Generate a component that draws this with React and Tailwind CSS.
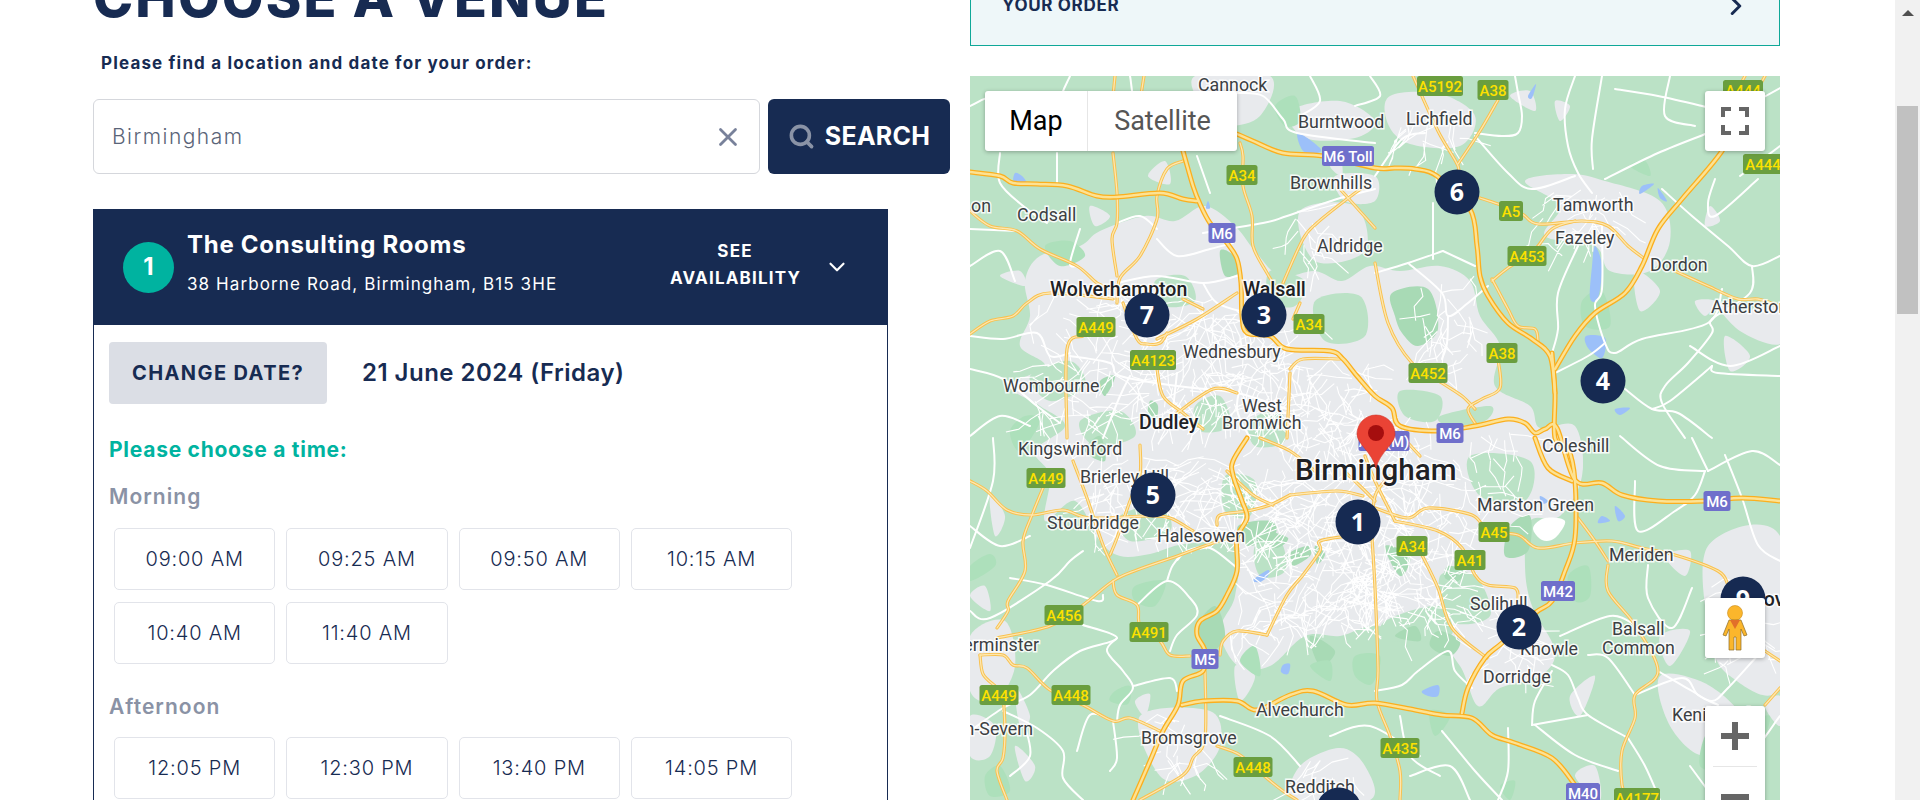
import React from 'react';
import { Search, X, ChevronDown, ChevronRight } from 'lucide-react';

const MORNING = ['09:00 AM', '09:25 AM', '09:50 AM', '10:15 AM', '10:40 AM', '11:40 AM'];
const AFTERNOON = ['12:05 PM', '12:30 PM', '13:40 PM', '14:05 PM'];

// --- map data, all in px relative to the map's top left corner ---
const URBAN = [
  '55,205 70,180 110,170 130,155 175,140 205,145 235,130 265,150 285,175 310,200 345,195 372,205 400,190 430,195 470,190 500,205 510,240 530,270 525,310 560,330 570,352 605,350 612,400 590,440 560,445 555,490 562,530 585,575 570,600 530,612 508,630 490,590 460,560 405,550 370,560 335,560 300,590 268,590 250,555 265,520 265,470 215,468 180,478 150,480 130,465 105,425 75,445 80,400 65,375 95,350 70,330 40,310 75,290 50,270 60,240',
  '225,0 300,0 290,40 255,50 235,35',
  '320,35 370,25 405,45 385,62 335,62',
  '420,20 470,18 505,40 490,70 440,68 418,48',
  '555,105 600,98 635,105 690,125 700,165 680,195 640,195 625,170 575,160 590,130',
  '745,225 770,235 810,232 810,268 770,255',
  '738,470 810,460 810,610 760,600 740,560',
  '170,640 240,635 250,670 225,700 190,700',
  '330,690 370,672 395,690 400,724 325,724',
  '0,560 35,545 45,590 25,625 0,615',
  '0,640 25,650 20,680 0,680',
  '330,135 385,130 395,175 345,185',
  '365,100 405,100 405,125 375,125',
  '690,600 740,610 775,650 735,680 700,650',
  '570,375 605,360 612,395 590,400',
];
const PARKS = [
  '422,217 458,213 468,253 448,270 432,257 425,240',
  '250,175 262,178 270,195 255,200',
  '180,325 188,330 185,348 178,340',
  '130,305 145,300 135,320',
  '300,205 310,215 302,225',
  '268,450 300,445 305,458 278,470',
  '318,478 338,470 340,480 322,490',
  '345,470 355,478 347,488',
  '293,455 318,462 305,472',
  '415,470 440,480 430,500',
  '478,490 495,495 488,505 475,502',
  '540,450 560,440 558,475 535,480',
  '468,555 490,565 480,580 460,570',
  '425,560 445,550 450,565',
  '340,560 365,575 350,590',
  '225,555 245,530 255,560 240,575',
  '115,375 130,360 135,385',
];
// lighter green fingers that cut into the built up area
const FINGERS = [
  '60,300 100,285 115,310 80,325', '110,345 150,335 165,360 125,370', '225,330 250,320 260,350 230,355',
  '280,345 310,335 315,365 285,370', '185,205 215,200 225,225 195,230', '300,195 335,205 325,230 300,225',
  '345,225 390,220 395,260 355,265', '470,340 520,330 515,345 480,350', '500,380 560,385 555,425 510,420',
  '285,470 310,465 315,495 290,500', '470,500 505,500 520,540 480,545', '415,545 470,530 480,560 420,565',
  '255,400 285,405 280,440 255,435', '150,440 190,430 200,455 160,465', '430,315 470,320 465,345 435,340',
];
const DARK_GREEN = [
  '40,355 55,340 70,345 50,375', '0,490 20,478 25,490 0,505', '165,510 195,505 185,530 165,525',
  '145,615 160,610 158,628 140,625', '385,580 410,580 402,608 385,600', '270,585 285,570 290,600',
  '305,30 325,20 330,45 315,50', '75,170 100,165 115,180 90,190', '660,90 675,85 680,100',
  '612,225 632,215 640,250 615,250', '598,500 618,490 620,520 605,525', '780,650 800,640 790,670',
  '15,700 30,690 40,715 20,720', '340,590 360,585 360,605', '460,635 480,640 465,660',
  '735,660 750,650 750,690 730,690', '530,710 545,705 540,724',
];
const GREY_PATCH = [
  '40,35 55,30 60,45', '178,100 195,85 200,108', '120,130 140,140 125,150', '30,200 50,195 55,210',
  '360,90 370,80 372,100', '20,420 35,440 25,460', '0,520 15,510 20,535', '45,610 60,640 50,650',
  '165,625 180,618 175,640', '45,670 65,690 55,705', '265,590 285,600 270,625', '600,620 625,600 610,640',
  '690,560 720,555 700,590', '665,195 690,215 670,235', '725,225 745,225 735,240', '585,25 600,30 590,45',
  '740,130 750,145 735,150', '605,700 625,690 630,724', '540,20 560,15 565,35', '770,35 790,40 775,55',
  '795,630 810,620 810,650', '695,480 720,475 715,500', '755,260 780,280 760,295',
];
const WATER = [
  '328,57 350,72 347,77 333,75', '45,97 52,100 56,107 44,106', '616,260 635,262 632,282 618,272',
  '625,170 632,190 628,222 620,222 622,190', '283,504 298,494 298,500 290,506', '645,333 660,332 650,339',
  '313,589 320,588 318,598 311,596', '452,615 468,609 468,620 458,620', '672,110 684,108 670,118',
  '688,112 697,125 690,122', '558,20 566,8 562,22', '238,125 240,132 236,132', '570,420 578,425 572,428',
  '645,430 655,440 648,445', '632,440 640,445 628,447',
];
const WHITE_ROADS = [
  '645,13 688,20 732,30 742,33', '545,0 548,17 552,40 548,57 532,60 505,57', '605,0 595,33 598,70 608,97 622,117',
  '632,0 622,63 623,93', '505,60 538,97 562,113 605,100', '635,103 688,77 738,57', '692,113 722,140 758,170 782,190 810,180',
  '745,103 738,127 745,140 788,103', '632,150 632,213 625,230 635,267 645,277 672,263 738,247 752,213',
  '608,170 588,217 588,253 582,277', '782,190 780,217 742,243 742,257 718,287 695,310 692,327 715,362',
  '655,313 682,333 708,337 742,362', '742,290 748,297 810,300', '682,333 700,325 742,290', '585,297 618,280 635,267',
  '473,175 438,187 405,197', '473,175 505,190', '438,187 472,217 478,240 498,227 518,210', '478,240 477,267 472,283',
  '463,127 463,183', '405,100 432,63 455,57', '267,17 293,20 313,43 327,57 405,67', '405,113 367,123 317,140 293,147 233,157',
  '227,80 240,117', '30,77 30,107 57,133 77,147', '87,77 87,107', '110,153 100,187 107,190', '147,147 170,140 187,153',
  '0,153 47,155', '187,163 207,180 240,173 263,167', '147,207 187,200 233,207 267,200', '233,207 247,227 277,237',
  '0,260 33,263 67,257 80,280 100,277', '100,280 140,287 150,300 207,310 267,317 317,333', '0,293 33,303 67,330 90,347',
  '133,362 150,320 160,300', '207,297 203,333', '273,300 267,333 280,362', '23,362 23,405 0,472',
  '0,535 20,542 80,505 100,485 113,475', '40,502 77,509 127,525 133,519', '113,549 147,562 110,575 83,595 60,619 33,632 0,655',
  '147,562 137,575 153,595 163,612 150,629 147,645', '163,610 200,602 207,615', '167,529 197,505 220,522 227,539 207,559 200,575',
  '197,505 203,489 217,475 240,472 267,492', '107,675 120,639 143,645', '33,635 67,652 93,675 93,702 113,724',
  '140,695 147,682 143,645', '582,589 598,599 608,622 618,639 658,662', '562,649 618,639', '562,649 565,625 582,595',
  '538,652 538,695 528,724', '618,579 638,582 665,619', '688,595 722,615 742,625 758,612 788,579', '678,489 678,522 702,552 722,512',
  '665,405 668,455 705,435 725,419 735,395', '755,379 772,422 788,469 810,485', '738,395 782,375 810,389', '722,362 738,395',
  '665,619 712,602 728,619 748,629', '405,615 432,609 448,595 478,575 485,595 502,612', '565,649 605,679 648,695',
  '472,655 505,695 532,724', '658,662 675,690 690,724', '720,690 745,724', '745,650 775,680 810,640', '0,30 30,20 75,40',
  '100,0 90,30 110,60', '160,0 170,40 210,60', '760,40 810,12', '40,700 60,680 55,650', '250,640 300,660 330,690', '470,700 440,680 430,640',
  '360,660 400,650 450,680', '0,190 30,175 45,205', '340,0 350,25 330,40', '400,0 410,20 385,30', '700,0 695,40 725,50', '770,100 810,70',
  '0,360 30,340 60,350', '60,460 30,470 0,450', '720,270 760,290 810,270', '650,360 690,390 735,395', '590,560 640,540 665,549', '440,700 480,690 500,724',
];
const THIN_ROADS = [
  '143,77 147,117 147,147 142,163 147,200', '213,85 197,93 187,120 187,143 170,180 150,202 147,227',
  '0,135 20,150 47,155 70,173 107,190 127,207 143,213', '0,258 20,245 43,240 57,227 80,217 143,223', '213,223 233,233',
  '187,263 227,243 267,217', '97,362 97,273 113,260', '153,227 167,263 177,268 190,267 197,257', '187,293 193,320 213,337 233,353',
  '207,337 243,313 267,317', '320,293 333,283 370,283', '320,297 317,362', '270,67 273,80 273,110 282,140 283,170 297,197 307,213',
  '330,227 323,243', '395,110 377,123 347,147 333,163 313,207', '370,113 405,152', '405,187 418,247 442,287 472,307 492,320 505,333',
  '528,283 530,312 512,323 498,333 507,350', '522,203 538,233 548,250 565,253 568,265', '522,205 538,192 562,177 582,153 605,145',
  '510,122 528,128 552,138 568,148 612,145 638,150 658,170 675,183', '705,195 738,210 768,223 788,223 810,230',
  '443,0 468,55 488,90 485,100', '488,88 510,55 528,24', '174,0 170,25', '145,0 142,30', '775,0 765,18', '795,0 785,18',
  '27,562 80,550 113,529 143,505 167,494 210,479 237,469 267,459', '0,405 17,415 37,434 62,439 93,434 120,442 177,440 200,442 223,455',
  '73,412 62,439 53,465 55,495 38,525 38,535 27,552', '103,385 117,422 133,469 147,499', '170,369 170,399 160,425 147,462 140,479',
  '143,505 147,519 167,529 170,549 190,565 200,579 220,580', '10,579 33,579 43,589 57,592 80,614 113,629 143,645 160,642 190,655',
  '33,615 35,655 33,682 27,695 37,724', '10,579 13,598 25,610', '235,595 235,662 223,682 213,699 170,724', '247,670 270,679 293,699 313,715 327,724',
  '297,559 267,555 253,565 250,579', '297,559 317,519 333,499 350,475 350,465 377,460', '320,419 367,415 393,420', '320,419 300,429 277,435 250,439 247,449',
  '257,395 283,419 303,429', '402,462 405,512 408,592 407,625 420,660 430,695 430,724', '452,479 468,512 482,552 517,582', '405,432 438,442 458,432 502,439 518,455 548,459 568,472 605,467 642,465 672,472 705,479 748,495 758,509',
  '425,445 468,455 492,472 505,499 518,509 545,512 548,525', '638,489 638,515 665,549 688,595 665,619 665,642 652,675 652,709 658,724',
  '608,442 625,465 638,485', '810,612 795,629', '795,575 810,585', '395,380 405,405 425,445', '420,400 405,420 402,462', '375,396 390,410 405,425', '290,362 320,375 345,395',
  '450,380 428,356',
];
const MOTORWAYS = [
  '0,96 30,100 43,107 67,108 97,110 127,120 147,121 190,117 213,123 227,125',
  '213,75 223,110 230,128 240,147 257,167 267,183 271,207 272,240 277,257 300,260 317,273 360,275 373,283 387,300 405,320 422,332 430,350 468,355 505,350 538,343 555,347 565,357 575,353 587,352 605,404 632,407 652,419 688,425 735,425 772,422 810,425',
  '582,277 585,317 585,362 598,372 605,405 605,462 595,495 582,525 565,537 532,567 515,582 498,612 492,637',
  '267,58 283,65 313,77 353,80 405,92 425,92 445,93 467,100 500,133 507,170 510,200 518,220 538,247 562,263 580,280 585,317',
  '585,293 605,260 625,237 655,217 672,190 688,153 712,123 752,75 775,30',
  '277,362 263,385 263,399 272,425 277,442 267,462 267,495 257,519 247,535 230,545 227,559 235,575 233,595 213,605 208,629 193,655 180,685 163,724',
  '212,629 233,625 267,625 287,634 320,619 343,615 377,629 405,627 445,634 472,639 502,642 522,659 545,667 582,682 605,709 615,724',
  '565,362 578,392 602,405',
];
const SHIELDS = [
  ['A34', 272, 99, 31], ['M6 Toll', 378, 80, 52, 1], ['M6', 252, 157, 27, 1], ['A34', 339, 248, 31], ['A449', 126, 251, 39], ['A4123', 183, 284, 46],
  ['A5192', 470, 10, 46], ['A38', 523, 14, 31], ['A444', 793, 88, 40], ['A444', 773, 14, 40], ['A5', 541, 135, 24], ['A453', 557, 180, 39], ['A38', 532, 277, 31], ['A452', 458, 297, 39],
  ['M6', 480, 357, 27, 1], ['A38(M)', 414, 365, 51, 1], ['A449', 76, 402, 39], ['A456', 94, 539, 39], ['A491', 179, 556, 39], ['M5', 235, 583, 27, 1], ['A449', 29, 619, 39], ['A448', 101, 619, 39],
  ['A448', 283, 691, 39], ['M6', 747, 425, 27, 1], ['A45', 524, 456, 31], ['A34', 442, 470, 31], ['A41', 500, 484, 31], ['M42', 588, 515, 34, 1], ['A435', 430, 672, 39], ['M40', 613, 717, 34, 1], ['A4177', 667, 722, 46],
];
const LABELS = [
  ['Cannock', 228, 15], ['Burntwood', 328, 52], ['Brownhills', 320, 113], ['Codsall', 47, 145], ['on', 1, 136], ['Aldridge', 347, 176],
  ['Wolverhampton', 80, 220, 500], ['Walsall', 273, 220, 500], ['Wednesbury', 213, 282], ['Wombourne', 33, 316], ['West', 272, 336], ['Bromwich', 252, 353], ['Dudley', 169, 353, 500],
  ['Lichfield', 436, 49], ['Tamworth', 583, 135], ['Fazeley', 585, 168], ['Dordon', 680, 195], ['Atherstone', 741, 237],
  ['Kingswinford', 48, 379], ['Brierley Hill', 110, 407], ['Stourbridge', 77, 453], ['Halesowen', 187, 466], ['Alvechurch', 286, 640], ['Bromsgrove', 171, 668], ['Redditch', 315, 717],
  ['Coleshill', 572, 376], ['Marston Green', 507, 435], ['Meriden', 639, 485], ['Solihull', 500, 534], ['Knowle', 550, 579], ['Balsall', 642, 559], ['Common', 632, 578], ['Dorridge', 513, 607], ['Kenilworth', 702, 645], ['Coventry', 781, 530, 500],
];
const PINS = [['7', 177, 239], ['3', 294, 239], ['6', 487, 116], ['4', 633, 305], ['5', 183, 419], ['1', 388, 446], ['2', 549, 551], ['9', 773, 523], ['8', 369, 734]];

function pts(s) {
  return s.split(' ').map(p => p.split(',').map(Number));
}

// catmull-rom through the traced points so the roads don't look like zigzags
function smooth(s) {
  const p = pts(s);
  let d = `M${p[0][0]} ${p[0][1]}`;
  for (let i = 0; i < p.length - 1; i++) {
    const a = p[i - 1] || p[i];
    const b = p[i];
    const c = p[i + 1];
    const e = p[i + 2] || c;
    d += ` C${b[0] + (c[0] - a[0]) / 6} ${b[1] + (c[1] - a[1]) / 6} ${c[0] - (e[0] - b[0]) / 6} ${c[1] - (e[1] - b[1]) / 6} ${c[0]} ${c[1]}`;
  }
  return d;
}

// same thing, closed, for the land use blobs
function blob(s) {
  const p = pts(s);
  const n = p.length;
  let d = `M${p[0][0]} ${p[0][1]}`;
  for (let i = 0; i < n; i++) {
    const a = p[(i - 1 + n) % n];
    const b = p[i];
    const c = p[(i + 1) % n];
    const e = p[(i + 2) % n];
    d += ` C${b[0] + (c[0] - a[0]) / 6} ${b[1] + (c[1] - a[1]) / 6} ${c[0] - (e[0] - b[0]) / 6} ${c[1] - (e[1] - b[1]) / 6} ${c[0]} ${c[1]}`;
  }
  return d + 'Z';
}

// small street mesh for the built up areas
function streets() {
  const blobs = [
    [370, 495, 55, 55, 130], [440, 500, 55, 50, 70], [300, 430, 50, 40, 70], [190, 420, 70, 40, 90], [150, 280, 85, 65, 110],
    [260, 290, 70, 55, 90], [340, 320, 60, 40, 70], [400, 390, 60, 50, 70], [480, 400, 70, 50, 50], [290, 520, 30, 40, 25],
    [480, 250, 30, 50, 25], [610, 140, 40, 30, 20], [460, 50, 30, 20, 15], [775, 540, 30, 50, 25], [205, 670, 25, 25, 15], [360, 700, 25, 20, 12],
    [540, 560, 30, 30, 20], [350, 160, 25, 25, 12],
  ];
  let seed = 7;
  const rnd = () => {
    seed = (seed * 16807) % 2147483647;
    return seed / 2147483647;
  };
  let d = '';
  blobs.forEach(([cx, cy, rx, ry, n]) => {
    for (let i = 0; i < n; i++) {
      let x = cx + (rnd() * 2 - 1) * rx;
      let y = cy + (rnd() * 2 - 1) * ry;
      d += `M${x.toFixed(1)} ${y.toFixed(1)}`;
      const dir = rnd() * Math.PI;
      for (let j = 0; j < 3; j++) {
        const a = dir + (rnd() - 0.5) * 1.2;
        const l = 6 + rnd() * 12;
        x += Math.cos(a) * l;
        y += Math.sin(a) * l;
        d += `L${x.toFixed(1)} ${y.toFixed(1)}`;
      }
    }
  });
  return d;
}

const HALO = { stroke: '#ffffff', strokeWidth: 3, strokeOpacity: 0.85, paintOrder: 'stroke' };

function MapCanvas() {
  return (
    <svg viewBox="0 0 810 724" className="block w-full h-full" style={{ fontFamily: 'Roboto, sans-serif' }}>
      <rect width="810" height="724" fill="#bbe2c6" />
      {URBAN.map((p, i) => <path key={i} d={blob(p)} fill="#e8eaed" />)}
      {GREY_PATCH.map((p, i) => <path key={i} d={blob(p)} fill="#e8eaed" />)}
      {FINGERS.map((p, i) => <path key={i} d={blob(p)} fill="#bbe2c6" />)}
      {PARKS.map((p, i) => <path key={i} d={blob(p)} fill="#a8dab5" />)}
      {DARK_GREEN.map((p, i) => <path key={i} d={blob(p)} fill="#ade0bb" />)}
      <path d={blob('563,452 575,442 595,445 585,462 572,464')} fill="#ffffff" />
      {WATER.map((p, i) => <path key={i} d={blob(p)} fill="#9cc0f9" />)}
      <path d={streets()} fill="none" stroke="#ffffff" strokeWidth="1.1" strokeLinejoin="round" />
      <g fill="none" stroke="#ffffff" strokeWidth="2" strokeLinejoin="round" strokeLinecap="round">
        {WHITE_ROADS.map((r, i) => <path key={i} d={smooth(r)} />)}
      </g>
      <g fill="none" strokeLinejoin="round" strokeLinecap="round">
        {THIN_ROADS.map((r, i) => <path key={i} d={smooth(r)} stroke="#f9c14e" strokeWidth="3.2" />)}
        {THIN_ROADS.map((r, i) => <path key={i} d={smooth(r)} stroke="#fde7b0" strokeWidth="1.3" />)}
        {MOTORWAYS.map((r, i) => <path key={i} d={smooth(r)} stroke="#fbaf1e" strokeWidth="5" />)}
        {MOTORWAYS.map((r, i) => <path key={i} d={smooth(r)} stroke="#fde293" strokeWidth="2.4" />)}
      </g>
      {LABELS.map(([t, x, y, w]) => (
        <text key={t} x={x} y={y} fontSize={w ? 19.5 : 17.8} fontWeight={w || 400} fill={w ? '#202124' : '#3c4043'} {...HALO}>{t}</text>
      ))}
      <text x="69" y="575" textAnchor="end" fontSize="17.8" fill="#3c4043" {...HALO}>Kidderminster</text>
      <text x="63" y="659" textAnchor="end" fontSize="17.8" fill="#3c4043" {...HALO}>Stourport-on-Severn</text>
      <text x="325" y="404" fontSize="29.6" fontWeight="500" fill="#202124" {...HALO}>Birmingham</text>
      {SHIELDS.map(([t, x, y, w, blue], i) => (
        <g key={i}>
          <rect x={x - w / 2} y={y - 10} width={w} height="20" rx="2.5" fill={blue ? '#6f6fcb' : '#6a9e3f'} />
          <text x={x} y={y + 5.5} textAnchor="middle" fontSize="15" fontWeight="500" fill={blue ? '#ffffff' : '#fde100'}>{t}</text>
        </g>
      ))}
      <path d="M406 392 C402 376 387 368 387 358 A19 19 0 1 1 425 358 C425 368 410 376 406 392 Z" fill="#ea4335" stroke="#d33426" strokeWidth="0.6" />
      <circle cx="406" cy="357" r="8" fill="#a50e0e" />
      {PINS.map(([n, x, y]) => (
        <g key={n}>
          <circle cx={x} cy={y} r="22.5" fill="#162a52" />
          <text x={x} y={y + 9} textAnchor="middle" fontSize="25" fontWeight="700" fill="#ffffff" style={{ fontFamily: '"Noto Sans", sans-serif' }}>{n}</text>
        </g>
      ))}
    </svg>
  );
}

function TimeGrid({ times }) {
  return (
    <div className="flex flex-wrap gap-x-[11px] gap-y-[12px] pl-[5px] w-[700px]">
      {times.map(t => (
        <button key={t} className="w-[161.3px] h-[62px] border border-[#e2e4ea] rounded-[5px] bg-white text-[20px] font-light text-[#172b52] tracking-[0.04em]">
          {t}
        </button>
      ))}
    </div>
  );
}

export default function App() {
  return (
    <div className="flex h-[800px] overflow-hidden bg-white text-[#172b52]" style={{ fontFamily: 'Inter, sans-serif' }}>
      <div className="flex gap-[20px] pl-[93px] flex-1">
        {/* left column */}
        <div className="w-[857px] shrink-0">
          <h1 className="-mt-[24px] h-[43px] text-[54px] leading-[43px] font-extrabold tracking-[0.04em] whitespace-nowrap">CHOOSE A VENUE</h1>
          <p className="mt-[31px] ml-[8px] h-[26px] text-[17px] leading-[26px] font-bold tracking-[0.068em] whitespace-nowrap">Please find a location and date for your order:</p>
          <div className="mt-[23px] flex gap-[8px] h-[75px]">
            <div className="w-[667px] flex items-center justify-between pl-[18px] pr-[16px] border border-[#d5d7dc] rounded-[6px]">
              <span className="text-[21px] font-light tracking-[0.07em] text-[#5a6478]">Birmingham</span>
              <X size={30} strokeWidth={2.2} className="text-[#78819a]" />
            </div>
            <button className="w-[182px] flex items-center justify-center gap-[10px] bg-[#172b52] rounded-[6px] text-white text-[25px] font-bold tracking-[0.01em]">
              <Search size={27} strokeWidth={3.2} className="text-[#8a93a6]" />
              SEARCH
            </button>
          </div>
          <div className="mt-[35px] w-[795px]">
            <div className="h-[116px] bg-[#172b52] text-white flex items-center pl-[30px] pr-[38px]">
              <div className="w-[51px] h-[51px] rounded-full bg-[#00b3a0] flex items-center justify-center text-[24px] font-bold">1</div>
              <div className="ml-[13px] flex-1 -mt-[8px]">
                <div className="text-[24px] leading-[30px] font-bold tracking-[0.03em]">The Consulting Rooms</div>
                <div className="mt-[12px] text-[17px] leading-[24px] tracking-[0.065em]">38 Harborne Road, Birmingham, B15 3HE</div>
              </div>
              <div className="w-[130px] mb-[4px] text-center text-[17px] leading-[27px] font-bold tracking-[0.07em]">SEE<br />AVAILABILITY</div>
              <ChevronDown size={26} strokeWidth={2} className="ml-[24px]" />
            </div>
            <div className="border-x border-[#172b52] pl-[15px] pt-[17px] pb-[60px]">
              <div className="flex items-center gap-[35px]">
                <button className="w-[218px] h-[62px] bg-[#dbdee5] rounded-[4px] text-[20px] font-bold tracking-[0.07em]">CHANGE DATE?</button>
                <span className="text-[24px] font-semibold tracking-[0.02em]">21 June 2024 (Friday)</span>
              </div>
              <div className="mt-[32px] text-[21px] leading-[28px] font-bold tracking-[0.035em] text-[#00b3a0]">Please choose a time:</div>
              <div className="mt-[19px] text-[21px] leading-[28px] font-semibold tracking-[0.05em] text-[#8a92a5]">Morning</div>
              <div className="mt-[17px]"><TimeGrid times={MORNING} /></div>
              <div className="mt-[29px] text-[21px] leading-[28px] font-semibold tracking-[0.05em] text-[#8a92a5]">Afternoon</div>
              <div className="mt-[16px]"><TimeGrid times={AFTERNOON} /></div>
            </div>
          </div>
        </div>

        {/* right column */}
        <div className="w-[810px] shrink-0">
          <div className="-mt-[50px] h-[96px] border border-[#0fa898] bg-[#eef7f9] flex items-center justify-between pl-[31px] pr-[28px] pt-[16px]">
            <span className="text-[17px] font-bold tracking-[0.04em]">YOUR ORDER</span>
            <ChevronRight size={30} strokeWidth={2.4} />
          </div>
          <div className="relative mt-[30px] h-[724px] overflow-hidden">
            <MapCanvas />
            <div className="absolute left-[15px] top-[15px] flex h-[60px] w-[252px] bg-white rounded-[3px] shadow-[0_1px_4px_rgba(0,0,0,0.3)] text-[27px]" style={{ fontFamily: 'Roboto, sans-serif' }}>
              <div className="w-[103px] flex items-center justify-center text-black border-r border-[#e6e6e6]">Map</div>
              <div className="flex-1 flex items-center justify-center text-[#565656]">Satellite</div>
            </div>
            <div className="absolute right-[15px] top-[15px] w-[60px] h-[60px] bg-white rounded-[3px] shadow-[0_1px_4px_rgba(0,0,0,0.3)] flex items-center justify-center">
              <svg width="28" height="28" viewBox="0 0 28 28" fill="none" stroke="#666" strokeWidth="4">
                <path d="M2 10V2H10M18 2H26V10M26 18V26H18M10 26H2V18" />
              </svg>
            </div>
            <div className="absolute right-[15px] top-[522px] w-[60px] h-[60px] bg-white rounded-[3px] shadow-[0_1px_4px_rgba(0,0,0,0.3)] flex items-center justify-center">
              <svg width="26" height="46" viewBox="0 0 26 46">
                <circle cx="13" cy="8" r="7.5" fill="#fbb62c" stroke="#c98a17" strokeWidth="0.6" />
                <path d="M7 15H19L25 30 22 31 19 24V45H14V32H12V45H7V24L4 31 1 30Z" fill="#fbb62c" stroke="#8a6a2a" strokeWidth="0.7" />
                <path d="M8 15H18L13 24Z" fill="#e2702a" />
              </svg>
            </div>
            <div className="absolute right-[15px] top-[630px] w-[60px] h-[120px] bg-white rounded-[3px] shadow-[0_1px_4px_rgba(0,0,0,0.3)]">
              <div className="h-[60px] flex items-center justify-center">
                <svg width="28" height="28" viewBox="0 0 28 28" fill="#666"><path d="M11 0H17V11H28V17H17V28H11V17H0V11H11Z" /></svg>
              </div>
              <div className="mx-[8px] h-px bg-[#e6e6e6]" />
              <div className="h-[59px] flex items-center justify-center">
                <svg width="28" height="28" viewBox="0 0 28 28" fill="#666"><path d="M0 11H28V17H0Z" /></svg>
              </div>
            </div>
          </div>
        </div>
      </div>

      {/* scrollbar */}
      <div className="w-[25px] shrink-0 bg-[#f1f1f1] flex flex-col items-center">
        <div className="mt-[10px] w-0 h-0 border-x-[6px] border-x-transparent border-b-[6px] border-b-[#505050]" />
        <div className="mt-[90px] w-[21px] h-[208px] bg-[#c1c1c1]" />
      </div>
    </div>
  );
}
